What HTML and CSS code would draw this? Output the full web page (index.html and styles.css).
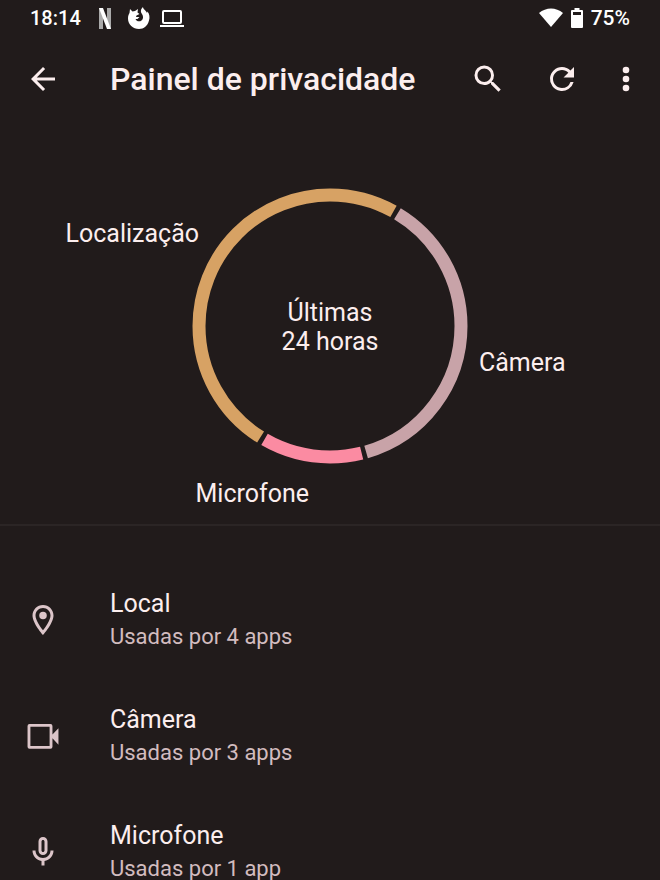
FILE: index.html
```
<!DOCTYPE html>
<html lang="pt-BR">
  <head>
    <meta charset="UTF-8">
    <meta name="viewport" content="width=device-width, initial-scale=1.0">
    <title>Painel de privacidade</title>
    <link rel="stylesheet" href="styles.css">
  </head>
  <body>
    <div class="status-bar">
      <span class="clock">18:14</span>
      <div class="notifications">
        <svg width="20" height="22" viewBox="0 0 20 22">
          <path fill="#aaa" d="M1 1h4v21H1zM9 1h4v21H9z"/>
          <path fill="#fff" d="M1 1h4l8 21H9z"/>
        </svg>
        <svg width="22" height="22" viewBox="0 0 22 22">
          <path fill="#fff" d="M2 2l2.500 2.500L7 4l3-2-.5 3.500 2 1.500-3 1.500L8 10l3.500 0-2 2H7.500c1 2.500 4 3 6 1.500 2-1.500 2-4.500.5-6.500-2-2.500-1-5.500 1-7 0 2.500 3 3 4 6l.5-1.500c2 2.500 2.500 6 1.500 9C19.500 19 16 22 11 22 5 22 0 17.500 0 11.500 0 9 .5 7.500 1.500 6z"/>
        </svg>
        <svg width="24" height="22" viewBox="0 0 24 22">
          <rect x="3" y="4" width="18" height="12" rx="1" fill="none" stroke="#fff" stroke-width="2"/>
          <path fill="#fff" d="M0 18h24v2H0z"/>
        </svg>
      </div>
      <div class="system">
        <svg width="24" height="20" viewBox="0 0 24 20">
          <path fill="#fff" d="M0 5C7-1 17-1 24 5L12 19z"/>
        </svg>
        <svg width="12" height="20" viewBox="0 0 12 20">
          <path fill="#fff" fill-rule="evenodd" d="M3.500 0h5v2H11q1 0 1 1v16q0 1-1 1H1q-1 0-1-1V3q0-1 1-1h2.500zM2 4v3h8V4z"/>
        </svg>
        <span>75%</span>
      </div>
    </div>

    <header class="app-bar">
      <button class="back" aria-label="Voltar">
        <svg class="icon" viewBox="0 0 24 24"><path d="M20 11H7.830l5.590-5.590L12 4l-8 8 8 8 1.410-1.410L7.830 13H20v-2z"/></svg>
      </button>
      <h1>Painel de privacidade</h1>
      <button class="action" aria-label="Pesquisar">
        <svg class="icon" viewBox="0 0 24 24"><path d="M15.500 14h-.79l-.28-.27A6.471 6.471 0 0 0 16 9.500 6.500 6.500 0 1 0 9.500 16c1.610 0 3.090-.59 4.230-1.570l.27.28v.79l5 4.990L20.490 19l-4.990-5zm-6 0C7.010 14 5 11.990 5 9.500S7.010 5 9.500 5 14 7.010 14 9.500 11.990 14 9.500 14z"/></svg>
      </button>
      <button class="action" aria-label="Atualizar">
        <svg class="icon" viewBox="0 0 24 24"><path d="M17.650 6.350A7.958 7.958 0 0 0 12 4a8 8 0 1 0 7.730 10h-2.080A5.990 5.990 0 0 1 12 18c-3.310 0-6-2.690-6-6s2.690-6 6-6c1.660 0 3.140.69 4.220 1.780L13 11h7V4l-2.350 2.350z"/></svg>
      </button>
      <button class="more" aria-label="Mais opções">
        <svg class="icon" viewBox="0 0 24 24"><circle cx="12" cy="6" r="2.200"/><circle cx="12" cy="12" r="2.200"/><circle cx="12" cy="18" r="2.200"/></svg>
      </button>
    </header>

    <main>
      <svg class="chart" viewBox="0 0 660 402" role="img" aria-label="Uso nas últimas 24 horas">
        <!-- one unit of pathLength is one degree, clockwise from the top -->
        <g class="ring" transform="rotate(-90 330 204)">
          <circle class="camera" cx="330" cy="204" r="131" pathLength="360" stroke-dasharray="133 227" stroke-dashoffset="-31"/>
          <circle class="microphone" cx="330" cy="204" r="131" pathLength="360" stroke-dasharray="44 316" stroke-dashoffset="-166"/>
          <circle class="location" cx="330" cy="204" r="131" pathLength="360" stroke-dasharray="177 183" stroke-dashoffset="-212"/>
        </g>
        <text x="330" y="199" text-anchor="middle">Últimas</text>
        <text x="330" y="228" text-anchor="middle">24 horas</text>
        <text x="199" y="120" text-anchor="end">Localização</text>
        <text x="479" y="249">Câmera</text>
        <text x="309" y="380" text-anchor="end">Microfone</text>
      </svg>

      <ul class="permissions">
        <li>
          <a href="#local">
            <svg class="icon" viewBox="0 0 24 24"><path d="M12 2C8.130 2 5 5.130 5 9c0 5.250 7 13 7 13s7-7.750 7-13c0-3.870-3.130-7-7-7zM7 9c0-2.760 2.240-5 5-5s5 2.240 5 5c0 2.880-2.880 7.190-5 9.880C9.920 16.210 7 11.850 7 9z"/><circle cx="12" cy="9" r="2.500"/></svg>
            <span class="name">Local</span>
            <span class="usage">Usadas por 4 apps</span>
          </a>
        </li>
        <li>
          <a href="#camera">
            <svg class="icon" viewBox="0 0 24 24"><path fill-rule="evenodd" d="M3 4h14q1.300 0 1.300 1.300V11L22.300 6.800v11L18.300 13.500v5.700q0 1.300-1.300 1.300H3q-1.300 0-1.300-1.300V5.300Q1.700 4 3 4zm.600 1.900v12.700h12.800V5.900z"/></svg>
            <span class="name">Câmera</span>
            <span class="usage">Usadas por 3 apps</span>
          </a>
        </li>
        <li>
          <a href="#microfone">
            <svg class="icon" viewBox="0 0 24 24"><path d="M12 14c1.660 0 3-1.340 3-3V5c0-1.660-1.340-3-3-3S9 3.340 9 5v6c0 1.660 1.340 3 3 3zm-1-9c0-.55.45-1 1-1s1 .45 1 1v6c0 .55-.45 1-1 1s-1-.45-1-1V5zm6 6c0 2.760-2.240 5-5 5s-5-2.240-5-5H5c0 3.530 2.610 6.430 6 6.920V21h2v-3.080c3.390-.49 6-3.390 6-6.920h-2z"/></svg>
            <span class="name">Microfone</span>
            <span class="usage">Usadas por 1 app</span>
          </a>
        </li>
      </ul>
    </main>
  </body>
</html>
```
FILE: styles.css
```
* {
  box-sizing: border-box;
}
body {
  margin: 0;
  height: 100vh;
  overflow: hidden;
  background: #211b1b;
  color: #fceeee;
  font-family: Roboto, "Noto Sans", sans-serif;
}
.icon {
  width: 36px;
  height: 36px;
  fill: currentColor;
}
.status-bar {
  display: flex;
  align-items: center;
  height: 36px;
  padding: 0 30px;
  color: #fff;
  font-size: 21px;
  font-weight: 500;
}
.clock {
  font-size: 20px;
}
.notifications {
  display: flex;
  gap: 10px;
  margin-left: 17px;
}
.system {
  display: flex;
  align-items: center;
  gap: 8px;
  margin-left: auto;
}
.app-bar {
  display: flex;
  align-items: center;
  height: 86px;
  padding-right: 7px;
}
.app-bar h1 {
  flex: 1;
  margin: 0;
  font-size: 32px;
  font-weight: 500;
  white-space: nowrap;
}
.app-bar button {
  display: flex;
  justify-content: center;
  padding: 0;
  border: 0;
  background: none;
  color: inherit;
}
.app-bar .back {
  width: 86px;
  margin-right: 24px;
}
.action {
  width: 74px;
}
.more {
  width: 54px;
}
.chart {
  display: block;
  width: 100%;
  max-width: 660px;
  margin: 0 auto;
}
.chart text {
  fill: #fceeee;
  font-size: 25px;
}
.ring circle {
  fill: none;
  stroke-width: 13px;
}
.ring .camera {
  stroke: #c8a3a8;
}
.ring .microphone {
  stroke: #fb8ba2;
}
.ring .location {
  stroke: #d7a264;
}
.permissions {
  margin: 0;
  padding: 36px 0 0;
  border-top: 2px solid #2b2525;
  list-style: none;
}
.permissions a {
  display: grid;
  grid-template-columns: 86px 1fr;
  column-gap: 24px;
  align-content: center;
  height: 116px;
  color: inherit;
  text-decoration: none;
}
.permissions .icon {
  grid-row: span 2;
  place-self: center;
  color: #dcc5c9;
}
.name {
  font-size: 25px;
  line-height: 34px;
}
.usage {
  color: #d2bcbf;
  font-size: 22px;
  line-height: 32px;
}
```
